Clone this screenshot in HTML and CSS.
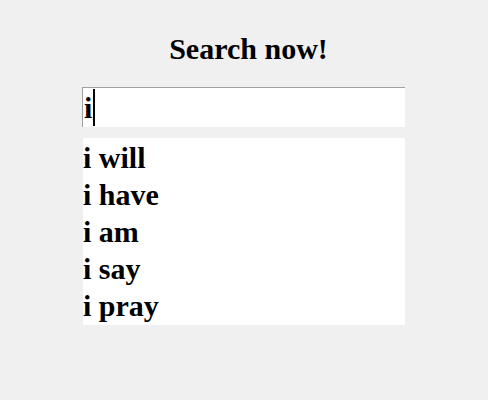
FILE: index.html
```html
<!DOCTYPE html>
<html>
<head>
<meta charset="utf-8">
<link rel="stylesheet" href="styles.css">
</head>
<body>
<div class="search">
  <h1 class="title">Search now!</h1>
  <div class="field"><span class="value">i</span><span class="caret"></span></div>
  <ul class="suggestions">
    <li>i will</li>
    <li>i have</li>
    <li>i am</li>
    <li>i say</li>
    <li>i pray</li>
  </ul>
</div>
</body>
</html>
```
FILE: styles.css
```css
html, body {
  margin: 0;
  padding: 0;
  background: #f0f0f0;
  font-family: "Liberation Serif", "Times New Roman", serif;
  font-weight: bold;
  color: #000;
}
.search {
  width: 324px;
  margin: 0 auto;
  padding-top: 30px;
}
.title {
  margin: 0 0 20px 0;
  font-size: 30px;
  line-height: 37px;
  text-align: center;
  padding-left: 9px;
}
.field {
  box-sizing: border-box;
  height: 40px;
  margin-right: 1px;
  background: #fff;
  border-top: 1px solid #a0a0a0;
  border-left: 1px solid #a0a0a0;
  display: flex;
  align-items: center;
  font-size: 30px;
  line-height: 37px;
  padding-left: 1px;
}
.caret {
  display: inline-block;
  width: 2px;
  height: 37px;
  background: #000;
  margin-left: 1px;
}
.suggestions {
  list-style: none;
  margin: 11px 1px 0 1px;
  padding: 1px 0;
  background: #fff;
  font-size: 30px;
  line-height: 37px;
}
.suggestions li {
  margin: 0;
}
```
